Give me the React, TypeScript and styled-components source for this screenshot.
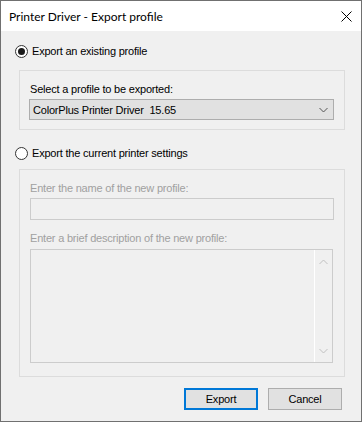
import React, { useState } from 'react'
import styled, { createGlobalStyle } from 'styled-components'

const GlobalStyle = createGlobalStyle`
  html, body {
    margin: 0;
    padding: 0;
    background: #ffffff;
  }
`

const Window = styled.div`
  width: 362px;
  height: 422px;
  box-sizing: border-box;
  border: 1px solid #707070;
  display: flex;
  flex-direction: column;
  font-family: 'Liberation Sans', Arial, sans-serif;
  font-size: 11px;
  letter-spacing: -0.2px;
  color: #000;
`

const TitleBar = styled.div`
  height: 30px;
  flex: none;
  background: #ffffff;
  display: flex;
  align-items: center;
  justify-content: space-between;
  padding: 0 8px 0 8px;
`

const Title = styled.span`
  font-family: Lato, 'Noto Sans', sans-serif;
  font-size: 12px;
  letter-spacing: 0;
  color: #000;
`

const CloseIcon = styled.svg`
  width: 11px;
  height: 11px;
  margin-right: 1px;
`

const Body = styled.div`
  flex: 1;
  background: #f0f0f0;
  display: flex;
  flex-direction: column;
  padding: 12px 16px 0 14px;
`

const RadioRow = styled.label`
  display: flex;
  align-items: center;
  gap: 4px;
  height: 16px;
  cursor: default;
`

const RadioCircle = styled.span<{ $checked: boolean }>`
  width: 13px;
  height: 13px;
  box-sizing: border-box;
  border-radius: 50%;
  border: 1px solid #333;
  background: #fff;
  display: flex;
  align-items: center;
  justify-content: center;
  &::after {
    content: '';
    width: 7px;
    height: 7px;
    border-radius: 50%;
    background: #1a1a1a;
    display: ${({ $checked }) => ($checked ? 'block' : 'none')};
  }
`

const Group = styled.div<{ $height: number; $top: number }>`
  margin: ${({ $top }) => $top}px 0 0 4px;
  height: ${({ $height }) => $height}px;
  box-sizing: border-box;
  border: 1px solid #dcdcdc;
  display: flex;
  flex-direction: column;
  padding: 11px 10px 0 9px;
`

const Label = styled.div<{ $disabled?: boolean; $gap?: number }>`
  height: 14px;
  line-height: 14px;
  margin-top: ${({ $gap }) => $gap ?? 0}px;
  margin-left: 1px;
  color: ${({ $disabled }) => ($disabled ? '#a0a0a0' : '#000')};
`

const Combo = styled.div`
  height: 21px;
  box-sizing: border-box;
  border: 1px solid #adadad;
  background: #e1e1e1;
  display: flex;
  align-items: center;
  justify-content: space-between;
  padding: 0 5px 0 3px;
  margin-top: 3px;
`

const Field = styled.div`
  height: 22px;
  box-sizing: border-box;
  border: 1px solid #cccccc;
  background: #f0f0f0;
  margin: 3px 0 0 1px;
`

const TextArea = styled.div`
  height: 114px;
  box-sizing: border-box;
  border: 1px solid #cccccc;
  background: #f0f0f0;
  margin: 4px 1px 0 1px;
  display: flex;
  justify-content: flex-end;
`

const ScrollBar = styled.div`
  width: 17px;
  border-left: 1px solid #ffffff;
  display: flex;
  flex-direction: column;
  justify-content: space-between;
  align-items: center;
  padding: 9px 0 8px 0;
`

const Footer = styled.div`
  display: flex;
  justify-content: flex-end;
  gap: 10px;
  margin-top: 11px;
  padding-right: 3px;
`

const Button = styled.button<{ $default?: boolean }>`
  width: 74px;
  height: 22px;
  box-sizing: border-box;
  border: ${({ $default }) => ($default ? '2px solid #0078d7' : '1px solid #adadad')};
  background: #e1e1e1;
  font-family: 'Liberation Sans', Arial, sans-serif;
  font-size: 11px;
  letter-spacing: -0.2px;
  color: #000;
  padding: 0;
`

const Chevron = ({ up, color }: { up?: boolean; color: string }) => (
  <svg width="9" height="6" viewBox="0 0 9 6">
    <path
      d={up ? 'M0.5 5 L4.5 1 L8.5 5' : 'M0.5 1 L4.5 5 L8.5 1'}
      fill="none"
      stroke={color}
      strokeWidth="1"
    />
  </svg>
)

export default function App() {
  const [mode, setMode] = useState<'existing' | 'current'>('existing')

  return (
    <>
      <GlobalStyle />
      <Window>
        <TitleBar>
          <Title>Printer Driver - Export profile</Title>
          <CloseIcon viewBox="0 0 11 11">
            <path d="M0.5 0.5 L10.5 10.5 M10.5 0.5 L0.5 10.5" stroke="#000" strokeWidth="1" />
          </CloseIcon>
        </TitleBar>
        <Body>
          <RadioRow onClick={() => setMode('existing')}>
            <RadioCircle $checked={mode === 'existing'} />
            <span>Export an existing profile</span>
          </RadioRow>
          <Group $height={60} $top={11}>
            <Label>Select a profile to be exported:</Label>
            <Combo>
              <span>ColorPlus Printer Driver&nbsp;&nbsp;15.65</span>
              <Chevron color="#555" />
            </Combo>
          </Group>
          <div style={{ height: 15 }} />
          <RadioRow onClick={() => setMode('current')}>
            <RadioCircle $checked={mode === 'current'} />
            <span>Export the current printer settings</span>
          </RadioRow>
          <Group $height={208} $top={8}>
            <Label $disabled>Enter the name of the new profile:</Label>
            <Field />
            <Label $disabled $gap={11}>Enter a brief description of the new profile:</Label>
            <TextArea>
              <ScrollBar>
                <Chevron up color="#c0c0c0" />
                <Chevron color="#c0c0c0" />
              </ScrollBar>
            </TextArea>
          </Group>
          <Footer>
            <Button $default>Export</Button>
            <Button>Cancel</Button>
          </Footer>
        </Body>
      </Window>
    </>
  )
}
